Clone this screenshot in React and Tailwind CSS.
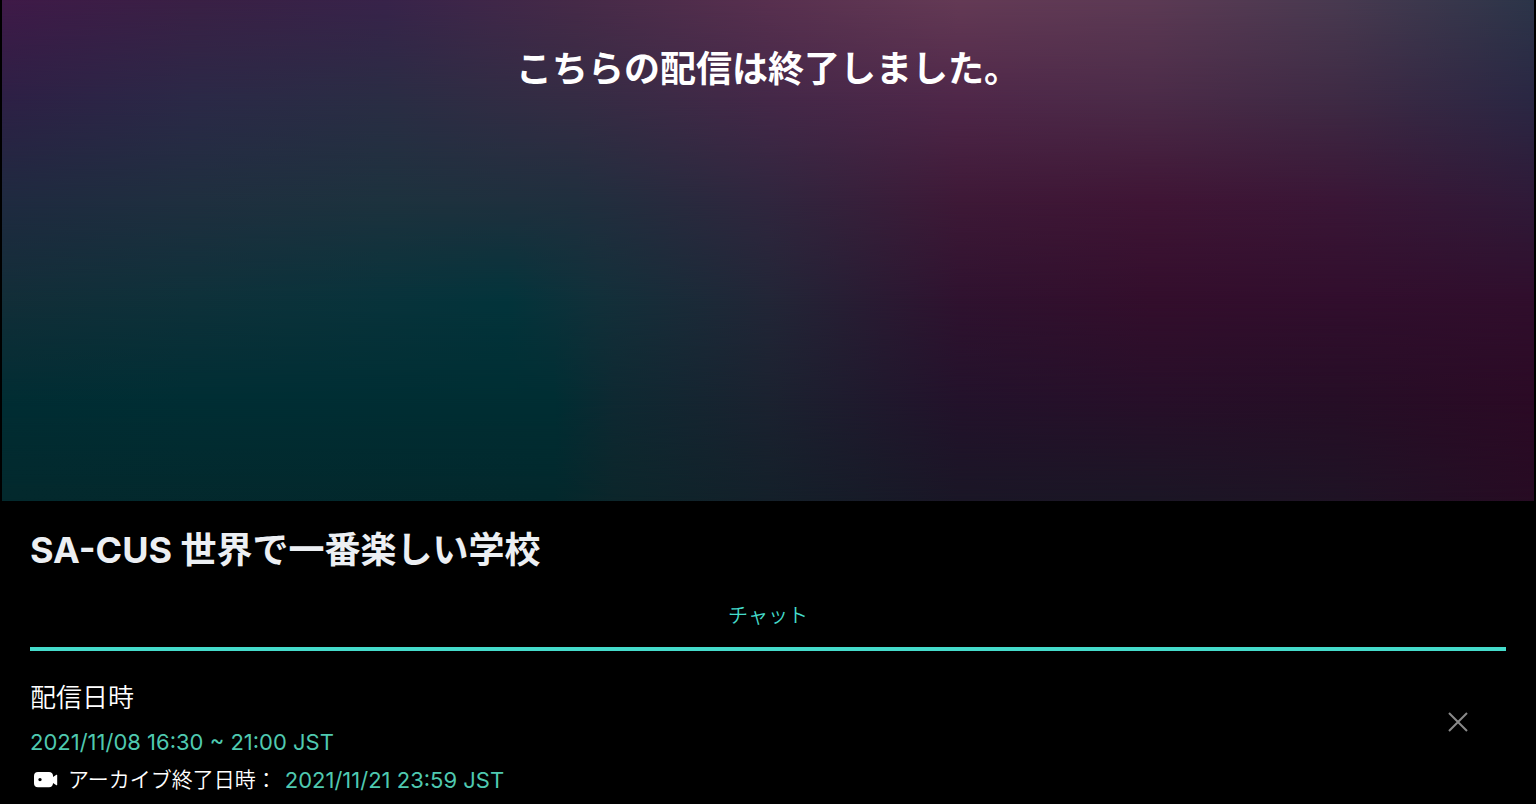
import React from "react";

const MESH_ROWS = [
  "bg-[linear-gradient(90deg,#3f1a48_0%,#3a2045_12.5%,#38234a_25%,#462a48_37.5%,#58304f_50%,#643a55_62.5%,#5c3a54_75%,#483a50_87.5%,#2c3549_100%)]",
  "bg-[linear-gradient(90deg,#2d2045_0%,#2b2947_12.5%,#2a2d44_25%,#352c44_37.5%,#442848_50%,#4f2749_62.5%,#4b2b48_75%,#3e2a44_87.5%,#2a2743_100%)] [mask-image:linear-gradient(180deg,transparent_0%,black_20%)]",
  "bg-[linear-gradient(90deg,#1f2a40_0%,#1f2f3f_12.5%,#1d323e_25%,#202f3e_37.5%,#30263e_50%,#3e1937_62.5%,#3f1535_75%,#3a1636_87.5%,#2f1a38_100%)] [mask-image:linear-gradient(180deg,transparent_20%,black_40%)]",
  "bg-[linear-gradient(90deg,#122e38_0%,#0e313a_12.5%,#08333b_25%,#03343b_33%,#12303a_39%,#222637_50%,#2f122f_62.5%,#330e2c_75%,#310e2d_87.5%,#300e2c_100%)] [mask-image:linear-gradient(180deg,transparent_40%,black_60%)]",
  "bg-[linear-gradient(90deg,#012d33_0%,#002e34_12.5%,#002e33_36%,#0e2932_40%,#1b2230_50%,#23122b_62.5%,#270f29_75%,#260e26_87.5%,#2b0a25_100%)] [mask-image:linear-gradient(180deg,transparent_60%,black_80%)]",
  "bg-[linear-gradient(90deg,#03292d_0%,#02282c_36%,#0c262b_40%,#14202a_50%,#1a1626_62.5%,#1b1625_75%,#1f1325_87.5%,#270b23_100%)] [mask-image:linear-gradient(180deg,transparent_80%,black_100%)]",
];

function MeshBackground() {
  return (
    <div aria-hidden="true" className="absolute inset-0">
      {MESH_ROWS.map((row) => (
        <div key={row} className={`absolute inset-0 ${row}`} />
      ))}
    </div>
  );
}

function CameraIcon() {
  return (
    <svg width="24" height="18" viewBox="0 0 24 18" className="shrink-0" aria-hidden="true">
      <path
        fill="#fff"
        fillRule="evenodd"
        d="M4 1h11a4 4 0 0 1 4 3.6V6l3.4-2.2a.5.5 0 0 1 .8.4v9.6a.5.5 0 0 1-.8.4L19 12v.6a4 4 0 0 1-4 3.6H4a4 4 0 0 1-4-4V5a4 4 0 0 1 4-4Zm2 5.9a1.7 1.7 0 1 0 0 3.4 1.7 1.7 0 0 0 0-3.4Z"
      />
    </svg>
  );
}

function CloseIcon() {
  return (
    <svg width="20" height="20" viewBox="0 0 20 20" aria-hidden="true">
      <path d="M1 1l18 18M19 1L1 19" stroke="#8a8a8a" strokeWidth="2" fill="none" />
    </svg>
  );
}

export default function App() {
  return (
    <main className="min-h-screen bg-black font-['Inter','Noto_Sans_CJK_JP',sans-serif] text-white">
      <section className="relative mx-0.5 min-h-[501px] overflow-hidden px-4 pt-11">
        <MeshBackground />
        <h2 className="relative text-center text-4xl leading-[50px] font-bold">
          こちらの配信は終了しました。
        </h2>
      </section>

      <div className="px-[30px]">
        <h1 className="pt-6 text-4xl leading-[50px] font-bold text-[#eceff3]">
          SA-CUS 世界で一番楽しい学校
        </h1>

        <div role="tablist" className="mt-4 flex">
          <button
            type="button"
            role="tab"
            aria-selected="true"
            className="flex-1 border-b-4 border-[#45dccb] pt-2.5 pb-4 text-xl leading-[30px] font-[350] text-[#45dccb]"
          >
            チャット
          </button>
        </div>

        <section className="flex items-start justify-between pt-7">
          <div>
            <h3 className="text-[26px] leading-[38px] font-[350]">配信日時</h3>
            <p className="mt-1.5 text-[22px] leading-[38px] text-[#4fc9b0]">
              2021/11/08 16:30 ~ 21:00 JST
            </p>
            <p className="flex items-center pl-1 text-[21px] leading-[38px]">
              <CameraIcon />
              <span className="ml-2.5 font-[350]">アーカイブ終了日時：</span>
              <span className="ml-2 text-[22px] text-[#4fc9b0]">2021/11/21 23:59 JST</span>
            </p>
          </div>
          <button type="button" aria-label="閉じる" className="mt-[23px] mr-7 p-2.5">
            <CloseIcon />
          </button>
        </section>
      </div>
    </main>
  );
}
